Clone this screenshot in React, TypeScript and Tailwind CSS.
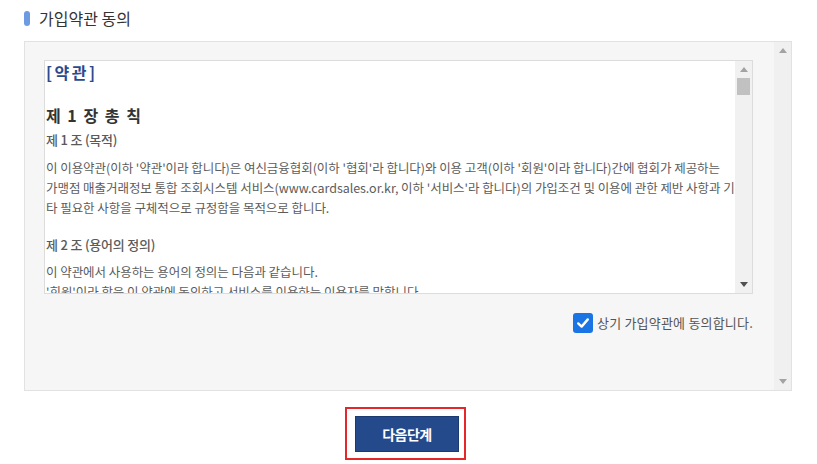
import React from "react";

const ArrowUp = ({ color }: { color: string }) => (
  <svg width="8" height="5" viewBox="0 0 8 5">
    <polygon points="4,0 8,5 0,5" fill={color} />
  </svg>
);
const ArrowDown = ({ color }: { color: string }) => (
  <svg width="8" height="5" viewBox="0 0 8 5">
    <polygon points="0,0 8,0 4,5" fill={color} />
  </svg>
);

export default function App() {
  return (
    <div className="w-[817px] h-[464px] bg-white overflow-hidden font-['Noto_Sans_CJK_KR',sans-serif]">
      {/* section title */}
      <div className="flex items-center ml-[24px] mt-[10px] h-[17px]">
        <div className="w-[6px] h-[15px] rounded-full bg-[#6d9ae0]" />
        <div className="ml-[9px] text-[16px] leading-[17px] tracking-[0px] text-[#333]">가입약관 동의</div>
      </div>

      {/* outer box */}
      <div className="ml-[24px] mt-[14px] w-[768px] h-[350px] border border-[#e2e2e2] bg-[#f6f6f6] flex">
        <div className="flex-1 pl-[19px] pt-[18px]">
          {/* inner terms box */}
          <div className="w-[709px] h-[234px] border border-[#dcdcdc] bg-white flex">
            <div className="flex-1 overflow-hidden pl-[1px] whitespace-nowrap">
              <div className="text-[16px] leading-[22px] font-bold tracking-[2.5px] text-[#2b4a8c]">[약관]</div>
              <div className="mt-[21px] text-[16px] leading-[22px] font-bold tracking-[1.5px] text-[#333]">제 1 장 총 칙</div>
              <div className="mt-[4px] text-[13px] leading-[20px] font-medium tracking-[-0.2px] text-[#5a5a5a]">제 1 조 (목적)</div>
              <div className="mt-[8px] text-[12.5px] leading-[20px] tracking-[-0.05px] text-[#5c5c5c]">
                <div>이 이용약관(이하 '약관'이라 합니다)은 여신금융협회(이하 '협회'라 합니다)와 이용 고객(이하 '회원'이라 합니다)간에 협회가 제공하는</div>
                <div>가맹점 매출거래정보 통합 조회시스템 서비스(www.cardsales.or.kr, 이하 '서비스'라 합니다)의 가입조건 및 이용에 관한 제반 사항과 기</div>
                <div>타 필요한 사항을 구체적으로 규정함을 목적으로 합니다.</div>
              </div>
              <div className="mt-[17px] text-[13px] leading-[20px] font-medium tracking-[-0.2px] text-[#5a5a5a]">제 2 조 (용어의 정의)</div>
              <div className="mt-[7px] text-[12.5px] leading-[20px] tracking-[-0.05px] text-[#5c5c5c]">
                <div>이 약관에서 사용하는 용어의 정의는 다음과 같습니다.</div>
                <div>'회원'이라 함은 이 약관에 동의하고 서비스를 이용하는 이용자를 말합니다.</div>
              </div>
            </div>
            {/* inner scrollbar */}
            <div className="w-[17px] bg-[#f1f1f1] flex flex-col items-center">
              <div className="h-[17px] flex items-center justify-center">
                <ArrowUp color="#a3a3a3" />
              </div>
              <div className="w-[13px] h-[17px] bg-[#c1c1c1]" />
              <div className="flex-1" />
              <div className="h-[17px] flex items-center justify-center">
                <ArrowDown color="#505050" />
              </div>
            </div>
          </div>

          {/* agree row */}
          <div className="w-[709px] mt-[19px] flex justify-end items-center">
            <div className="w-[20px] h-[20px] rounded-[3px] bg-[#1b74e4] flex items-center justify-center">
              <svg width="14" height="14" viewBox="0 0 14 14">
                <path d="M2.2 7.4 L5.6 10.6 L11.8 3.4" fill="none" stroke="#fff" strokeWidth="2.4" strokeLinecap="round" strokeLinejoin="round" />
              </svg>
            </div>
            <div className="ml-[4px] text-[13px] leading-[20px] tracking-[0.2px] text-[#555]">상기 가입약관에 동의합니다.</div>
          </div>
        </div>

        {/* outer scrollbar */}
        <div className="w-[17px] bg-[#f0f0f0] flex flex-col items-center justify-between">
          <div className="h-[17px] flex items-center justify-center">
            <ArrowUp color="#a3a3a3" />
          </div>
          <div className="h-[17px] flex items-center justify-center">
            <ArrowDown color="#a3a3a3" />
          </div>
        </div>
      </div>

      {/* next button */}
      <div className="flex justify-center pr-[6px] mt-[16px]">
        <div className="border-2 border-[#e5262b] pl-[8px] pr-[5px] pt-[7px] pb-[6px]">
          <button className="w-[104px] h-[36px] bg-[#244a8b] border border-[#1b3a70] text-white text-[14px] font-bold tracking-[-0.5px]">
            다음단계
          </button>
        </div>
      </div>
    </div>
  );
}
